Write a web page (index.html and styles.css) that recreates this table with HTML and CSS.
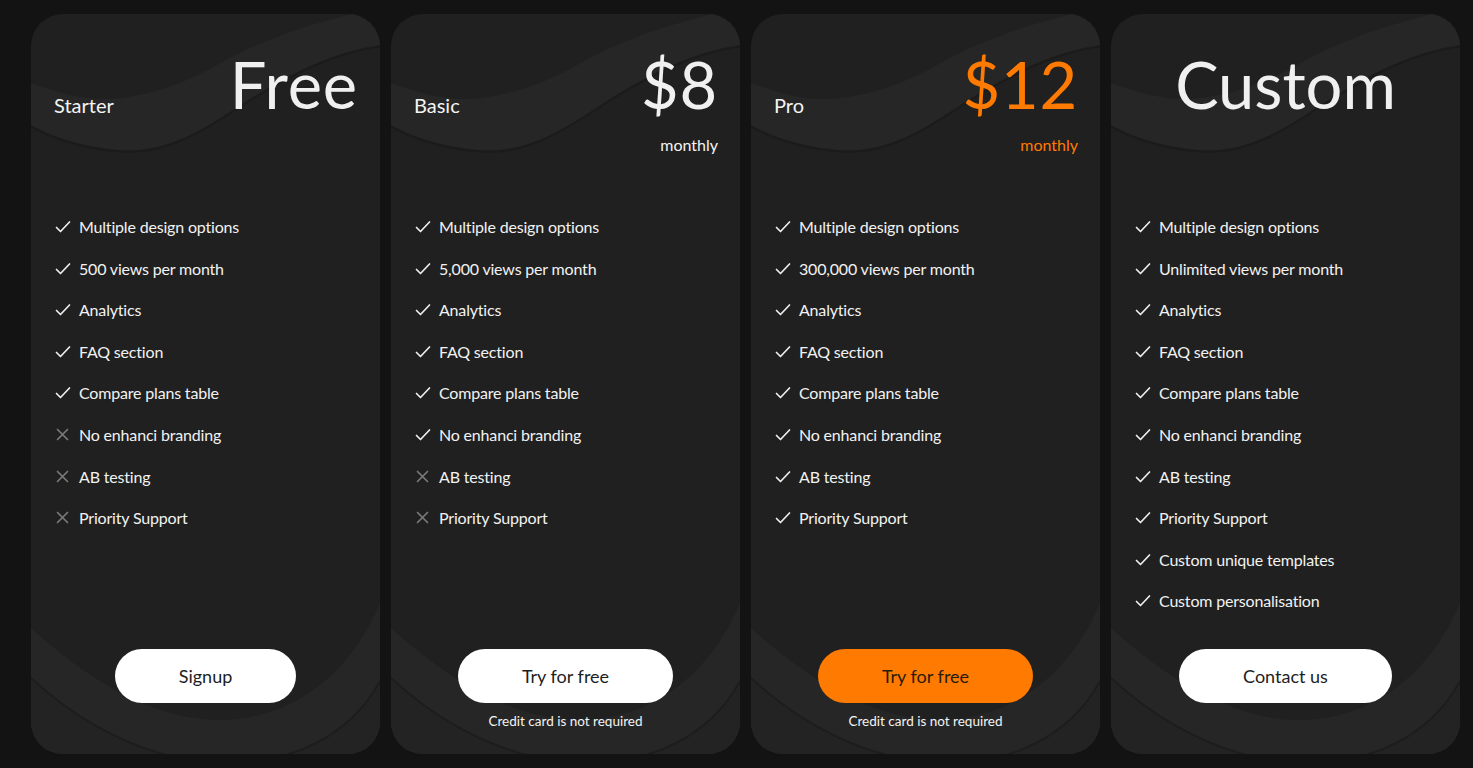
FILE: index.html
```html
<!DOCTYPE html>
<html lang="en">
<head>
<meta charset="utf-8">
<title>Pricing</title>
<link rel="stylesheet" href="styles.css">
</head>
<body>
<svg width="0" height="0" class="defs" aria-hidden="true">
  <defs>
    <symbol id="waves" viewBox="0 0 349 740">
      <path d="M0,69 C30,80 60,88 89,84 C120,80 135,74 156,66 C185,53 200,42 222,33 C260,16 300,4 349,-6 L349,31 C300,38 260,60 222,83 C180,110 140,140 89,136 C50,133 20,122 0,111 Z" fill="#262626"/>
      <path d="M349,32.5 C300,39.5 260,61.5 222,84.5 C180,111.5 140,141.5 89,137.5 C50,134.5 20,123.5 0,112.5" fill="none" stroke="#191715" stroke-width="2" opacity="0.55"/>
      <path d="M0,614 C40,650 110,706 189,706 C260,706 320,660 349,589 L349,740 L0,740 Z" fill="#262626"/>
      <path d="M0,663 C40,700 100,740 180,748 C260,752 320,720 349,666 L349,740 L0,740 Z" fill="#232323"/>
      <path d="M0,664 C40,701 100,741 180,749 C260,753 320,721 349,667" fill="none" stroke="#191715" stroke-width="2" opacity="0.5"/>
    </symbol>
    <symbol id="ck" viewBox="0 0 16 14">
      <path d="M1.5 7.5 L5.5 11.5 L14.5 2" fill="none" stroke="#eeeeee" stroke-width="1.7" stroke-linecap="round" stroke-linejoin="round"/>
    </symbol>
    <symbol id="no" viewBox="0 0 16 14">
      <path d="M2.5 1.5 L12.5 11.5 M12.5 1.5 L2.5 11.5" fill="none" stroke="#7a7a7a" stroke-width="1.7" stroke-linecap="round"/>
    </symbol>
  </defs>
</svg>
<main class="plans">
  <section class="card">
    <svg class="bg" viewBox="0 0 349 740"><use href="#waves"/></svg>
    <div class="content">
      <div class="head">
        <div class="row">
          <span class="name">Starter</span>
          <span class="price">Free</span>
        </div>
      </div>
      <ul class="feats">
        <li><svg class="ic"><use href="#ck"/></svg>Multiple design options</li>
        <li><svg class="ic"><use href="#ck"/></svg>500 views per month</li>
        <li><svg class="ic"><use href="#ck"/></svg>Analytics</li>
        <li><svg class="ic"><use href="#ck"/></svg>FAQ section</li>
        <li><svg class="ic"><use href="#ck"/></svg>Compare plans table</li>
        <li><svg class="ic"><use href="#no"/></svg>No enhanci branding</li>
        <li><svg class="ic"><use href="#no"/></svg>AB testing</li>
        <li><svg class="ic"><use href="#no"/></svg>Priority Support</li>
      </ul>
      <div class="foot">
        <a class="btn">Signup</a>
      </div>
    </div>
  </section>

  <section class="card">
    <svg class="bg" viewBox="0 0 349 740"><use href="#waves"/></svg>
    <div class="content">
      <div class="head">
        <div class="row">
          <span class="name">Basic</span>
          <span class="price">$8</span>
        </div>
        <div class="period">monthly</div>
      </div>
      <ul class="feats">
        <li><svg class="ic"><use href="#ck"/></svg>Multiple design options</li>
        <li><svg class="ic"><use href="#ck"/></svg>5,000 views per month</li>
        <li><svg class="ic"><use href="#ck"/></svg>Analytics</li>
        <li><svg class="ic"><use href="#ck"/></svg>FAQ section</li>
        <li><svg class="ic"><use href="#ck"/></svg>Compare plans table</li>
        <li><svg class="ic"><use href="#ck"/></svg>No enhanci branding</li>
        <li><svg class="ic"><use href="#no"/></svg>AB testing</li>
        <li><svg class="ic"><use href="#no"/></svg>Priority Support</li>
      </ul>
      <div class="foot">
        <a class="btn">Try for free</a>
        <p class="note">Credit card is not required</p>
      </div>
    </div>
  </section>

  <section class="card">
    <svg class="bg" viewBox="0 0 349 740"><use href="#waves"/></svg>
    <div class="content">
      <div class="head">
        <div class="row">
          <span class="name">Pro</span>
          <span class="price accent">$12</span>
        </div>
        <div class="period accent">monthly</div>
      </div>
      <ul class="feats">
        <li><svg class="ic"><use href="#ck"/></svg>Multiple design options</li>
        <li><svg class="ic"><use href="#ck"/></svg>300,000 views per month</li>
        <li><svg class="ic"><use href="#ck"/></svg>Analytics</li>
        <li><svg class="ic"><use href="#ck"/></svg>FAQ section</li>
        <li><svg class="ic"><use href="#ck"/></svg>Compare plans table</li>
        <li><svg class="ic"><use href="#ck"/></svg>No enhanci branding</li>
        <li><svg class="ic"><use href="#ck"/></svg>AB testing</li>
        <li><svg class="ic"><use href="#ck"/></svg>Priority Support</li>
      </ul>
      <div class="foot">
        <a class="btn btn-orange">Try for free</a>
        <p class="note">Credit card is not required</p>
      </div>
    </div>
  </section>

  <section class="card">
    <svg class="bg" viewBox="0 0 349 740"><use href="#waves"/></svg>
    <div class="content">
      <div class="head">
        <div class="row row-center">
          <span class="price price-custom">Custom</span>
        </div>
      </div>
      <ul class="feats">
        <li><svg class="ic"><use href="#ck"/></svg>Multiple design options</li>
        <li><svg class="ic"><use href="#ck"/></svg>Unlimited views per month</li>
        <li><svg class="ic"><use href="#ck"/></svg>Analytics</li>
        <li><svg class="ic"><use href="#ck"/></svg>FAQ section</li>
        <li><svg class="ic"><use href="#ck"/></svg>Compare plans table</li>
        <li><svg class="ic"><use href="#ck"/></svg>No enhanci branding</li>
        <li><svg class="ic"><use href="#ck"/></svg>AB testing</li>
        <li><svg class="ic"><use href="#ck"/></svg>Priority Support</li>
        <li><svg class="ic"><use href="#ck"/></svg>Custom unique templates</li>
        <li><svg class="ic"><use href="#ck"/></svg>Custom personalisation</li>
      </ul>
      <div class="foot">
        <a class="btn">Contact us</a>
      </div>
    </div>
  </section>
</main>
</body>
</html>
```

FILE: styles.css
```css
* { box-sizing: border-box; }

html, body {
  margin: 0;
  background: #131313;
  height: 100%;
}

body {
  font-family: Lato, "Open Sans", "Liberation Sans", sans-serif;
  color: #f2f2f2;
  overflow: hidden;
}

.defs {
  position: absolute;
  width: 0;
  height: 0;
}

.plans {
  display: grid;
  grid-template-columns: repeat(4, 349px);
  gap: 11px;
  padding: 14px 0 0 31px;
}

.card {
  position: relative;
  height: 740px;
  background: #202020;
  border-radius: 32px;
  overflow: hidden;
}

.bg {
  position: absolute;
  left: 0;
  top: 0;
  width: 349px;
  height: 740px;
}

.content {
  position: relative;
  height: 100%;
  display: flex;
  flex-direction: column;
  padding: 38px 22px 0 24px;
}

.head {
  height: 165px;
  flex: none;
}

.row {
  display: flex;
  justify-content: space-between;
  align-items: flex-end;
}

.row-center {
  justify-content: center;
  margin-left: -2px;
}

.name {
  font-size: 20px;
  line-height: 24px;
  color: #f4f4f4;
  margin-left: -1px;
}

.price {
  font-size: 65px;
  line-height: 65px;
  color: #f0f0f0;
  letter-spacing: 0.8px;
}

.price-custom {
  letter-spacing: 0;
}

.accent {
  color: #ff7a00;
}

.period {
  margin-top: 18px;
  text-align: right;
  font-size: 16px;
  line-height: 20px;
  color: #f4f4f4;
}

.period.accent {
  color: #ff7a00;
}

.feats {
  list-style: none;
  margin: 0;
  padding: 0;
  display: flex;
  flex-direction: column;
  gap: 21.6px;
  flex: 1;
}

.feats li {
  display: flex;
  align-items: center;
  font-size: 16px;
  line-height: 20px;
  letter-spacing: -0.18px;
  color: #f2f2f2;
}

.ic {
  width: 16px;
  height: 14px;
  margin-right: 8px;
  flex: none;
}

.foot {
  height: 105px;
  flex: none;
  display: flex;
  flex-direction: column;
  align-items: center;
  margin-left: -2px;
}

.btn {
  display: flex;
  align-items: center;
  justify-content: center;
  height: 54px;
  padding: 0 64px;
  border-radius: 27px;
  background: #ffffff;
  color: #1e1e1e;
  font-size: 18px;
  text-decoration: none;
}

.btn-orange {
  background: #ff7a00;
  color: #2a1a0a;
}

.note {
  margin: 9px 0 0;
  font-size: 13.5px;
  line-height: 18px;
  color: #f4f4f4;
}
```
